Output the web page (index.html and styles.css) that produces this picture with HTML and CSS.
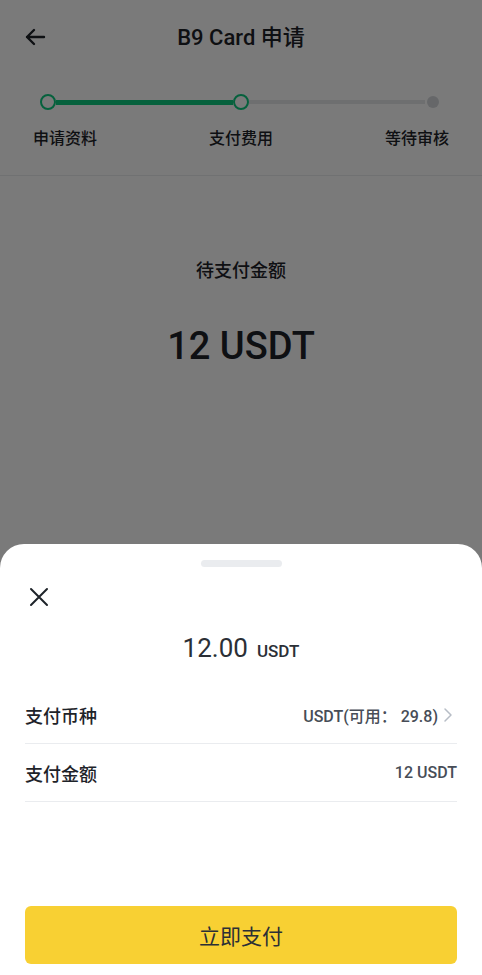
FILE: index.html
```html
<!DOCTYPE html>
<html lang="zh-CN">
<head>
<meta charset="utf-8">
<title>B9 Card 申请</title>
<link rel="stylesheet" href="styles.css">
</head>
<body>
<div class="page">
  <div class="topbar">
    <svg class="back" width="24" height="24" viewBox="0 0 24 24"><path d="M21 12H4M11 5l-7 7 7 7" fill="none" stroke="#1e2329" stroke-width="2.4" stroke-linecap="round" stroke-linejoin="round"/></svg>
    <div class="title">B9 Card 申请</div>
  </div>
  <div class="stepper">
    <span class="dot done"></span>
    <span class="line done"></span>
    <span class="dot done"></span>
    <span class="line"></span>
    <span class="dot todo"></span>
  </div>
  <div class="labels">
    <span>申请资料</span>
    <span>支付费用</span>
    <span>等待审核</span>
  </div>
  <div class="due">
    <div class="due-label">待支付金额</div>
    <div class="due-amount">12 USDT</div>
  </div>
</div>
<div class="mask"></div>
<div class="sheet">
  <div class="handle"></div>
  <svg class="close" width="20" height="20" viewBox="0 0 20 20"><path d="M2 2l16 16M18 2L2 18" stroke="#1e2329" stroke-width="2" stroke-linecap="round"/></svg>
  <div class="sum"><span class="sum-num">12.00</span><span class="sum-unit">USDT</span></div>
  <div class="row first">
    <span class="row-label">支付币种</span>
    <span class="row-value">USDT(可用：&nbsp;29.8)<svg class="chev" width="10" height="16" viewBox="0 0 10 16"><path d="M2 2l6 6-6 6" fill="none" stroke="#b7bdc6" stroke-width="1.5" stroke-linecap="round" stroke-linejoin="round"/></svg></span>
  </div>
  <div class="row">
    <span class="row-label">支付金额</span>
    <span class="row-value">12 USDT</span>
  </div>
  <button class="pay">立即支付</button>
</div>
</body>
</html>
```
FILE: styles.css
```css
* { box-sizing: border-box; }
html, body { margin: 0; padding: 0; }
body {
  width: 482px;
  height: 975px;
  overflow: hidden;
  background: #fff;
  font-family: Roboto, "Noto Sans CJK SC", sans-serif;
  color: #1e2329;
}
.page { height: 975px; }
.topbar {
  height: 76px;
  position: relative;
  display: flex;
  align-items: center;
  justify-content: center;
}
.back { position: absolute; left: 23px; top: 25px; }
.title { font-size: 22px; font-weight: 500; line-height: 30px; }
.stepper {
  display: flex;
  align-items: center;
  height: 16px;
  margin-top: 18px;
  padding: 0 43px 0 40px;
}
.dot { flex: none; border-radius: 50%; }
.dot.done { width: 16px; height: 16px; border: 2.5px solid #0ecb81; background: #fff; }
.dot.todo { width: 12px; height: 12px; background: #d5d8dc; margin-left: 2px; }
.line { flex: 1; height: 4px; background: #e6e8ea; }
.line.done { height: 5px; background: #0ecb81; }
.labels {
  display: flex;
  justify-content: space-between;
  margin-top: 18px;
  padding: 0 33px 25px 33px;
  font-size: 16px;
  font-weight: 500;
  line-height: 22px;
  color: #1e2329;
  border-bottom: 1px solid #eaecef;
}
.due { display: flex; flex-direction: column; align-items: center; }
.due-label { margin-top: 84px; font-size: 18px; font-weight: 500; line-height: 22px; }
.due-amount { margin-top: 41px; font-size: 38px; line-height: 46px; font-weight: 500; }
.mask { position: fixed; inset: 0; background: rgba(0, 0, 0, 0.52); }
.sheet {
  position: fixed;
  left: 0; right: 0; bottom: 0;
  height: 431px;
  background: #fff;
  border-radius: 24px 24px 0 0;
  display: flex;
  flex-direction: column;
  padding: 0 25px 11px;
}
.handle {
  align-self: center;
  width: 81px;
  height: 7px;
  border-radius: 4px;
  background: #eaecef;
  margin-top: 16px;
}
.close { margin-top: 20px; margin-left: 4px; flex: none; }
.sum {
  margin-top: 24px;
  display: flex;
  justify-content: center;
  align-items: baseline;
  line-height: 34px;
  color: #2b2f36;
}
.sum-num { font-size: 26px; font-weight: 400; }
.sum-unit { font-size: 17px; font-weight: 500; margin-left: 9px; }
.row {
  display: flex;
  justify-content: space-between;
  align-items: center;
  height: 58px;
  border-bottom: 1px solid #eaecef;
}
.row.first { margin-top: 18px; }
.row-label { font-size: 18px; font-weight: 500; color: #1e2329; }
.row-value { font-size: 16px; font-weight: 500; color: #474d57; display: flex; align-items: center; }
.chev { margin-left: 5px; margin-right: 4px; }
.pay {
  margin-top: auto;
  height: 58px;
  border: none;
  border-radius: 6px;
  background: #f8d033;
  font-family: "Noto Sans CJK SC", sans-serif;
  font-size: 21px;
  color: #2b2f36;
}
```
